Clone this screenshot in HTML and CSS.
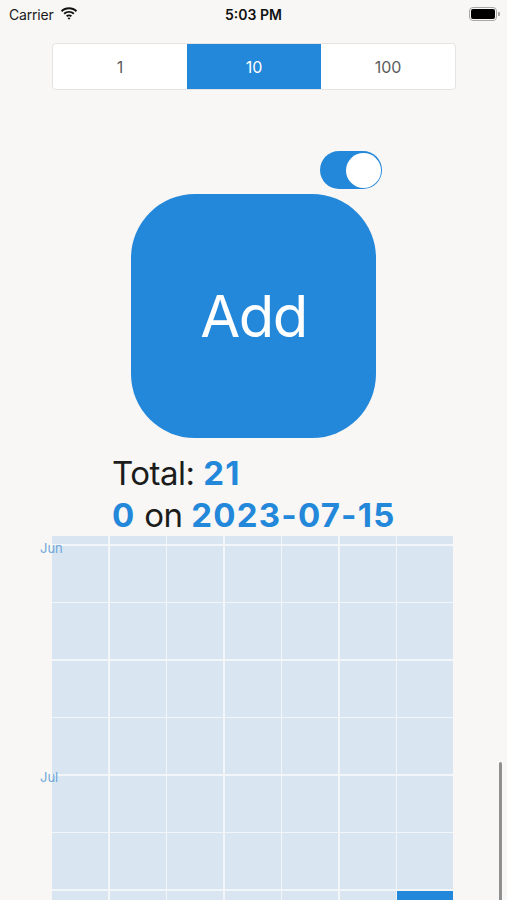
FILE: index.html
```html
<!DOCTYPE html>
<html>
<head>
<meta charset="utf-8">
<link rel="stylesheet" href="styles.css">
</head>
<body>
<div class="screen">
  <div class="statusbar">
    <div class="sb-left">
      <span class="carrier">Carrier</span>
      <svg class="wifi" width="18" height="13" viewBox="0 0 18 13">
        <path d="M9 2.2c2.6 0 5 1 6.8 2.7l1.3-1.4C14.9 1.5 12.1.3 9 .3S3.1 1.5.9 3.5l1.3 1.4C4 3.2 6.4 2.2 9 2.2z" fill="#111"/>
        <path d="M9 5.8c1.6 0 3.1.6 4.2 1.6l1.3-1.4C13 4.7 11.1 3.9 9 3.9S5 4.7 3.5 6l1.3 1.4C5.9 6.4 7.4 5.8 9 5.8z" fill="#111"/>
        <path d="M9 9.3c.7 0 1.3.2 1.8.6L12 8.5c-.8-.7-1.9-1.1-3-1.1s-2.2.4-3 1.1l1.2 1.4c.5-.4 1.1-.6 1.8-.6z" fill="#111"/>
        <path d="M9 12.8l1.5-1.7c-.4-.3-.9-.5-1.5-.5s-1.1.2-1.5.5z" fill="#111"/>
      </svg>
    </div>
    <div class="sb-time">5:03 PM</div>
    <div class="sb-right">
      <div class="battery"><div class="battery-fill"></div></div>
      <div class="battery-nub"></div>
    </div>
  </div>

  <div class="segmented">
    <div class="seg">1</div>
    <div class="seg seg-active">10</div>
    <div class="seg">100</div>
  </div>

  <div class="toggle"><div class="knob"></div></div>

  <div class="add-btn">Add</div>

  <div class="stats">
    <div class="line">Total: <b class="blue">21</b></div>
    <div class="line"><b class="blue">0</b> on <b class="blue">2023-07-15</b></div>
  </div>

  <div class="chart-wrap">
    <div class="chart">
      <div class="cell"></div><div class="cell"></div><div class="cell"></div><div class="cell"></div><div class="cell"></div><div class="cell"></div><div class="cell"></div>
      <div class="cell"></div><div class="cell"></div><div class="cell"></div><div class="cell"></div><div class="cell"></div><div class="cell"></div><div class="cell"></div>
      <div class="cell"></div><div class="cell"></div><div class="cell"></div><div class="cell"></div><div class="cell"></div><div class="cell"></div><div class="cell"></div>
      <div class="cell"></div><div class="cell"></div><div class="cell"></div><div class="cell"></div><div class="cell"></div><div class="cell"></div><div class="cell"></div>
      <div class="cell"></div><div class="cell"></div><div class="cell"></div><div class="cell"></div><div class="cell"></div><div class="cell"></div><div class="cell"></div>
      <div class="cell"></div><div class="cell"></div><div class="cell"></div><div class="cell"></div><div class="cell"></div><div class="cell"></div><div class="cell"></div>
      <div class="cell"></div><div class="cell"></div><div class="cell"></div><div class="cell"></div><div class="cell"></div><div class="cell"></div><div class="cell"></div>
      <div class="cell"></div><div class="cell"></div><div class="cell"></div><div class="cell"></div><div class="cell"></div><div class="cell"></div><div class="cell cell-on"></div>
    </div>
    <span class="month month-jun">Jun</span>
    <span class="month month-jul">Jul</span>
  </div>

  <div class="scrollbar"></div>
</div>
</body>
</html>
```

FILE: styles.css
```css
html, body {
  margin: 0;
  padding: 0;
  background: #f8f7f5;
}
.screen {
  position: relative;
  width: 507px;
  height: 900px;
  overflow: hidden;
  display: flex;
  flex-direction: column;
  font-family: Inter, "Noto Sans", sans-serif;
  color: #1c1c1c;
}
.screen > * {
  flex-shrink: 0;
}
.statusbar {
  height: 28px;
  display: grid;
  grid-template-columns: 1fr auto 1fr;
  align-items: center;
}
.sb-left {
  display: flex;
  align-items: center;
  padding-left: 9px;
  gap: 6px;
}
.carrier {
  font-size: 14px;
  color: #1a1a1a;
  letter-spacing: -0.2px;
}
.wifi { margin-top: -1px; }
.sb-time {
  font-size: 14px;
  font-weight: 600;
  color: #111;
}
.sb-right {
  display: flex;
  justify-content: flex-end;
  align-items: center;
  padding-right: 7px;
}
.battery {
  width: 24px;
  height: 10px;
  border: 1.5px solid #a7a7a7;
  border-radius: 4px;
  padding: 1px;
  box-sizing: content-box;
  display: flex;
}
.battery-fill {
  flex: 1;
  background: #000;
  border-radius: 2px;
}
.battery-nub {
  width: 2px;
  height: 4px;
  background: #a7a7a7;
  border-radius: 0 1px 1px 0;
  margin-left: 1px;
}
.segmented {
  margin: 15px 0 0 52px;
  width: 402px;
  height: 45px;
  border: 1px solid #e4e4e4;
  border-radius: 4px;
  background: #fff;
  display: flex;
  overflow: hidden;
}
.seg {
  flex: 1;
  display: flex;
  align-items: center;
  justify-content: center;
  font-size: 16px;
  color: #5c5c5c;
}
.seg-active {
  background: #2387da;
  color: #fff;
}
.toggle {
  margin: 61px 0 0 320px;
  width: 62px;
  height: 38px;
  border-radius: 19px;
  background: #2387da;
  display: flex;
  justify-content: flex-end;
  align-items: center;
  padding: 0 1px;
  box-sizing: border-box;
}
.knob {
  width: 35px;
  height: 35px;
  border-radius: 50%;
  background: #fff;
}
.add-btn {
  margin: 5px 0 0 131px;
  width: 245px;
  height: 244px;
  border-radius: 64px;
  background: #2387da;
  color: #fff;
  font-size: 58px;
  letter-spacing: -1.5px;
  display: flex;
  align-items: center;
  justify-content: center;
}
.stats {
  margin: 14px 0 0 112px;
  font-size: 33px;
  line-height: 42px;
  letter-spacing: -0.5px;
}
.line { white-space: nowrap; }
.blue {
  color: #2387da;
  font-weight: 700;
  letter-spacing: 1.2px;
}
.chart-wrap {
  position: relative;
  margin-left: 52px;
  width: 401px;
}
.chart {
  display: grid;
  grid-template-columns: repeat(7, 56px);
  grid-template-rows: 8px repeat(7, 56px);
  gap: 1.5px;
  background: #f3f6f9;
}
.cell {
  background: #d9e6f1;
}
.cell-on {
  background: #2387da;
}
.month {
  position: absolute;
  left: -12px;
  font-size: 13px;
  color: #6fa7da;
}
.month-jun { top: 4px; }
.month-jul { top: 233px; }
.scrollbar {
  position: absolute;
  left: 499px;
  top: 762px;
  width: 3px;
  height: 150px;
  border-radius: 2px;
  background: #8f8f8f;
}
```
